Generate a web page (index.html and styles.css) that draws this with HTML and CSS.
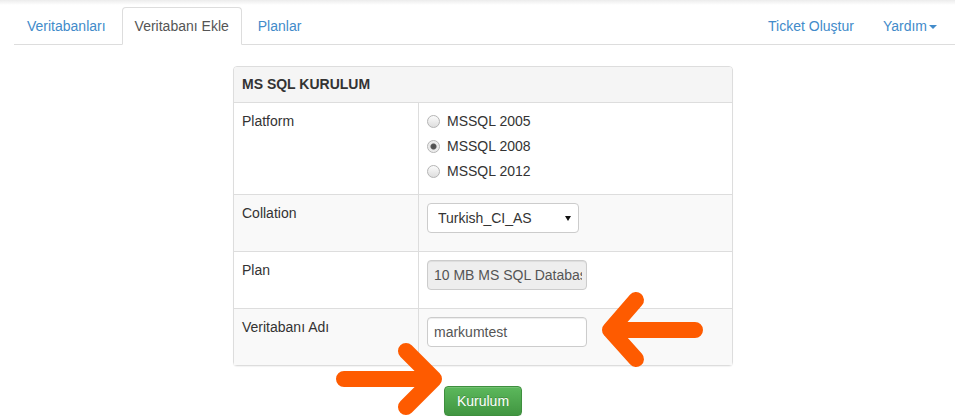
FILE: index.html
```html
<!DOCTYPE html>
<html lang="tr">
<head>
    <meta charset="UTF-8">
    <meta name="viewport" content="width=device-width, initial-scale=1.0">
    <title>Veritabanı Ekle</title>
    <link rel="stylesheet" href="styles.css">
</head>
<body>
    <div class="topbar"></div>
    <ul class="nav-tabs">
        <li><a href="#">Veritabanları</a></li>
        <li class="active"><a href="#">Veritabanı Ekle</a></li>
        <li><a href="#">Planlar</a></li>
        <li class="right"><a href="#">Ticket Oluştur</a></li>
        <li><a href="#">Yardım<span class="caret"></span></a></li>
    </ul>

    <div class="panel">
        <div class="panel-heading">MS SQL KURULUM</div>
        <div class="row">
            <div class="cell label">Platform</div>
            <div class="cell">
                <div class="radios">
                    <label class="radio"><input type="radio" name="platform" value="2005"> MSSQL 2005</label>
                    <label class="radio"><input type="radio" name="platform" value="2008" checked> MSSQL 2008</label>
                    <label class="radio"><input type="radio" name="platform" value="2012"> MSSQL 2012</label>
                </div>
            </div>
        </div>
        <div class="row">
            <div class="cell label">Collation</div>
            <div class="cell">
                <div class="select-wrap">
                    <select id="collation">
                        <option>Turkish_CI_AS</option>
                        <option>Latin1_General_CI_AS</option>
                    </select>
                </div>
            </div>
        </div>
        <div class="row">
            <div class="cell label">Plan</div>
            <div class="cell">
                <input type="text" class="form-control" value="10 MB MS SQL Database" disabled>
            </div>
        </div>
        <div class="row">
            <div class="cell label">Veritabanı Adı</div>
            <div class="cell">
                <input type="text" class="form-control" id="dbName" value="markumtest">
            </div>
        </div>
    </div>

    <div class="actions">
        <button class="btn-success" type="button">Kurulum</button>
    </div>

    <svg class="arrows" width="955" height="417" viewBox="0 0 955 417">
        <path d="M636 300 L610 330 L636 359 M610 330 H695" />
        <path d="M406 351 L434 379 L406 407 M434 379 H344" />
    </svg>
</body>
</html>
```

FILE: styles.css
```css
body {
    font-family: "Liberation Sans", Arial, sans-serif;
    font-size: 14px;
    line-height: 20px;
    color: #333;
    background-color: #fff;
    margin: 0;
    padding: 0;
    position: relative;
    overflow: hidden;
}
.topbar {
    height: 5px;
    background: linear-gradient(#ececec, #fff);
}
.nav-tabs {
    display: flex;
    list-style: none;
    margin: 2px 0 0 14px;
    padding: 0 2px 0 0;
    border-bottom: 1px solid #ddd;
}
.nav-tabs li {
    margin-bottom: -1px;
}
.nav-tabs li.right {
    margin-left: auto;
}
.nav-tabs a {
    display: block;
    padding: 8px 12px;
    margin-right: 3px;
    line-height: 20px;
    color: #428bca;
    text-decoration: none;
    border: 1px solid transparent;
    border-radius: 4px 4px 0 0;
}
.nav-tabs li.active a {
    color: #555;
    background-color: #fff;
    border-color: #ddd #ddd transparent;
}
.caret {
    display: inline-block;
    width: 0;
    height: 0;
    margin-left: 2px;
    vertical-align: middle;
    border-top: 4px solid #428bca;
    border-left: 4px solid transparent;
    border-right: 4px solid transparent;
}
.panel {
    box-sizing: border-box;
    width: 500px;
    margin: 21px 0 0 233px;
    border: 1px solid #ddd;
    border-radius: 4px;
    background-color: #fff;
    box-shadow: 0 1px 1px rgba(0,0,0,0.05);
}
.panel-heading {
    padding: 8px 8px;
    line-height: 19px;
    font-size: 14px;
    font-weight: bold;
    color: #333;
    background-color: #f5f5f5;
    border-bottom: 1px solid #ddd;
    border-radius: 3px 3px 0 0;
}
.row {
    display: grid;
    grid-template-columns: 184px 1fr;
}
.row + .row {
    border-top: 1px solid #ddd;
}
.row:nth-child(odd) {
    background-color: #f9f9f9;
}
.cell {
    padding: 8px;
}
.cell + .cell {
    border-left: 1px solid #ddd;
}
.radios {
    display: flex;
    flex-direction: column;
    gap: 5px;
    margin-bottom: 5px;
}
.radio {
    display: flex;
    align-items: center;
    height: 20px;
}
.radio input {
    appearance: none;
    -webkit-appearance: none;
    width: 13px;
    height: 13px;
    margin: 0 7px 0 0;
    border: 1px solid #b4b4b4;
    border-radius: 50%;
    background: linear-gradient(#fbfbfb, #dedede);
}
.radio input:checked {
    background: radial-gradient(circle, #4d4d4d 0, #555 2.5px, #e6e6e6 3.5px, #f2f2f2 6px);
}
.select-wrap {
    position: relative;
    display: inline-block;
    margin-bottom: 10px;
}
.select-wrap::after {
    content: "";
    position: absolute;
    right: 8px;
    top: 13px;
    border-top: 5px solid #111;
    border-left: 3.5px solid transparent;
    border-right: 3.5px solid transparent;
    pointer-events: none;
}
.select-wrap select {
    appearance: none;
    -webkit-appearance: none;
    display: block;
    box-sizing: border-box;
    width: 152px;
    height: 30px;
    padding: 0 10px;
    font-family: inherit;
    font-size: 14px;
    color: #333;
    background-color: #fff;
    border: 1px solid #ccc;
    border-radius: 4px;
}
.form-control {
    display: block;
    box-sizing: border-box;
    width: 160px;
    height: 30px;
    margin-bottom: 10px;
    padding: 0 4px 0 6px;
    font-family: inherit;
    font-size: 14px;
    color: #555;
    background-color: #fff;
    border: 1px solid #ccc;
    border-radius: 4px;
    box-shadow: inset 0 1px 1px rgba(0,0,0,0.075);
}
.form-control:disabled {
    background-color: #eee;
    color: #555;
    opacity: 1;
}
.actions {
    width: 500px;
    margin: 20px 0 0 233px;
    text-align: center;
}
.btn-success {
    padding: 5px 12px;
    font-family: inherit;
    font-size: 14px;
    line-height: 18px;
    color: #fff;
    text-shadow: 0 -1px 0 rgba(0,0,0,0.2);
    background: linear-gradient(#5cb85c, #419641);
    border: 1px solid #3e8f3e;
    border-radius: 4px;
    box-shadow: inset 0 1px 0 rgba(255,255,255,0.15), 0 1px 1px rgba(0,0,0,0.075);
}
.arrows {
    position: absolute;
    top: 0;
    left: 0;
    pointer-events: none;
}
.arrows path {
    fill: none;
    stroke: #fe5b00;
    stroke-width: 16;
    stroke-linecap: round;
    stroke-linejoin: round;
}
```
